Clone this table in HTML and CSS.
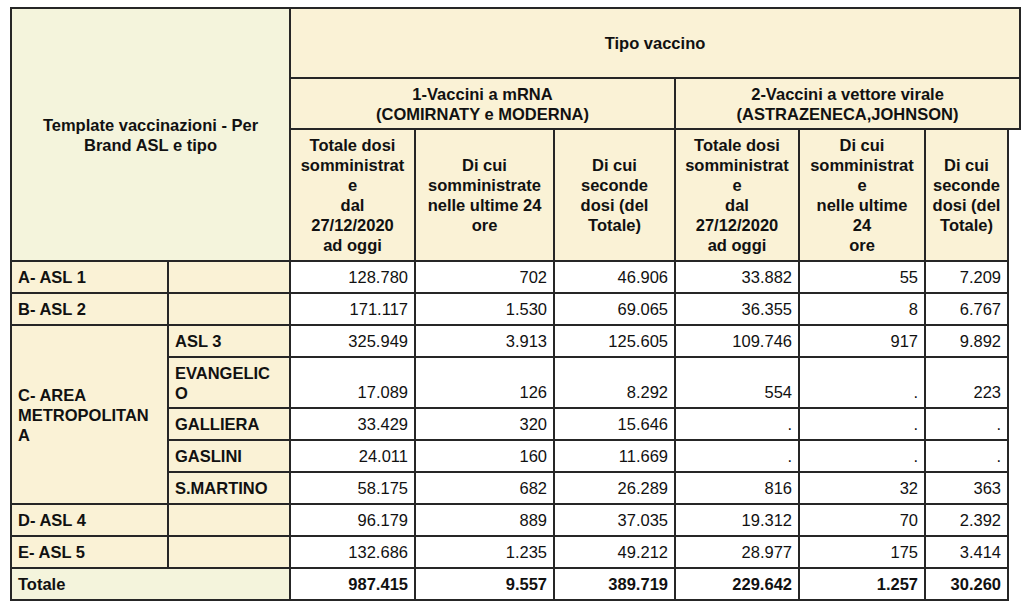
FILE: index.html
```html
<!DOCTYPE html>
<html lang="it">
<head>
<meta charset="utf-8">
<title>Template vaccinazioni</title>
<link rel="stylesheet" href="styles.css">
</head>
<body>
<table class="vax">
  <colgroup>
    <col class="c-area">
    <col class="c-sub">
    <col class="c-n1">
    <col class="c-n2">
    <col class="c-n3">
    <col class="c-n4">
    <col class="c-n5">
    <col class="c-n6">
    <col class="c-over">
  </colgroup>
  <thead>
    <tr class="h1">
      <th class="title" colspan="2" rowspan="3">Template vaccinazioni - Per<br>Brand ASL e tipo</th>
      <th class="hd" colspan="7">Tipo vaccino</th>
    </tr>
    <tr class="h2">
      <th class="hd" colspan="3">1-Vaccini a mRNA<br>(COMIRNATY e MODERNA)</th>
      <th class="hd" colspan="4">2-Vaccini a vettore virale<br>(ASTRAZENECA,JOHNSON)</th>
    </tr>
    <tr class="h3">
      <th class="hd">Totale dosi<br>somministrat<br>e<br>dal<br>27/12/2020<br>ad oggi</th>
      <th class="hd">Di cui<br>somministrate<br>nelle ultime 24<br>ore</th>
      <th class="hd">Di cui<br>seconde<br>dosi (del<br>Totale)</th>
      <th class="hd">Totale dosi<br>somministrat<br>e<br>dal<br>27/12/2020<br>ad oggi</th>
      <th class="hd">Di cui<br>somministrat<br>e<br>nelle ultime<br>24<br>ore</th>
      <th class="hd">Di cui<br>seconde<br>dosi (del<br>Totale)</th>
    </tr>
  </thead>
  <tbody>
    <tr>
      <th class="lbl">A- ASL 1</th><th class="lbl"></th>
      <td>128.780</td><td>702</td><td>46.906</td><td>33.882</td><td>55</td><td>7.209</td>
    </tr>
    <tr>
      <th class="lbl">B- ASL 2</th><th class="lbl"></th>
      <td>171.117</td><td>1.530</td><td>69.065</td><td>36.355</td><td>8</td><td>6.767</td>
    </tr>
    <tr>
      <th class="lbl mid" rowspan="5">C- AREA<br>METROPOLITAN<br>A</th><th class="lbl">ASL 3</th>
      <td>325.949</td><td>3.913</td><td>125.605</td><td>109.746</td><td>917</td><td>9.892</td>
    </tr>
    <tr class="tall">
      <th class="lbl">EVANGELIC<br>O</th>
      <td>17.089</td><td>126</td><td>8.292</td><td>554</td><td>.</td><td>223</td>
    </tr>
    <tr>
      <th class="lbl">GALLIERA</th>
      <td>33.429</td><td>320</td><td>15.646</td><td>.</td><td>.</td><td>.</td>
    </tr>
    <tr>
      <th class="lbl">GASLINI</th>
      <td>24.011</td><td>160</td><td>11.669</td><td>.</td><td>.</td><td>.</td>
    </tr>
    <tr>
      <th class="lbl">S.MARTINO</th>
      <td>58.175</td><td>682</td><td>26.289</td><td>816</td><td>32</td><td>363</td>
    </tr>
    <tr>
      <th class="lbl">D- ASL 4</th><th class="lbl"></th>
      <td>96.179</td><td>889</td><td>37.035</td><td>19.312</td><td>70</td><td>2.392</td>
    </tr>
    <tr>
      <th class="lbl">E- ASL 5</th><th class="lbl"></th>
      <td>132.686</td><td>1.235</td><td>49.212</td><td>28.977</td><td>175</td><td>3.414</td>
    </tr>
    <tr class="total">
      <th class="lbl tot" colspan="2">Totale</th>
      <td>987.415</td><td>9.557</td><td>389.719</td><td>229.642</td><td>1.257</td><td>30.260</td>
    </tr>
  </tbody>
</table>
</body>
</html>
```
FILE: styles.css
```css
html, body {
  margin: 0;
  padding: 0;
  background: #ffffff;
}

body {
  padding: 7px 0 0 10px;
  font-family: "Liberation Sans", Arial, sans-serif;
  font-size: 16.5px;
  line-height: 20px;
  color: #111;
}

.vax {
  border-collapse: collapse;
  table-layout: fixed;
  width: 1009px;
}

.c-area { width: 157px; }
.c-sub  { width: 122px; }
.c-n1   { width: 125px; }
.c-n2   { width: 139px; }
.c-n3   { width: 121px; }
.c-n4   { width: 124px; }
.c-n5   { width: 126px; }
.c-n6   { width: 83px; }
.c-over { width: 12px; }

.vax th,
.vax td {
  border: 2px solid #262626;
  padding: 0 6px;
}

.vax th {
  font-weight: bold;
}

.hd {
  background: #faf2d6;
  text-align: center;
  vertical-align: middle;
}

.title {
  background: #f4f4dc;
  text-align: center;
  vertical-align: middle;
  padding-top: 8px;
}

.h1 { height: 70px; }
.h2 { height: 51px; }
.h3 { height: 132px; }

.vax tbody tr { height: 32px; }
.vax tbody tr.tall { height: 51px; }

.lbl {
  background: #faf2d6;
  text-align: left;
  vertical-align: middle;
  padding-left: 6px;
}

.lbl.tot {
  background: #f4f4dc;
}

.vax td {
  background: #ffffff;
  text-align: right;
  vertical-align: bottom;
  padding-bottom: 5px;
  padding-right: 6px;
}

.total td {
  font-weight: bold;
}
```
